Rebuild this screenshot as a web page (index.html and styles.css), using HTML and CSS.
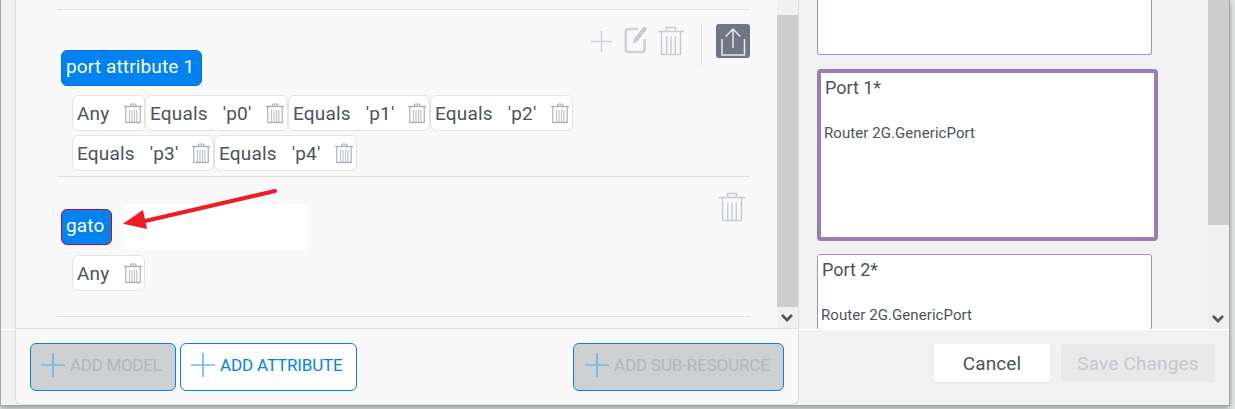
FILE: index.html
```html
<!DOCTYPE html>
<html lang="en">
<head>
<meta charset="utf-8">
<title>Port attributes</title>
<link rel="stylesheet" href="styles.css">
</head>
<body>
<svg class="defs" width="0" height="0">
  <symbol id="trash" viewBox="0 0 26 30">
    <path d="M0 5.500H26M8.500 5V1.500H17.500V5M3.500 6V28.500H22.500V6M8.700 10.500V28M13 10.500V28M17.300 10.500V28" fill="none" stroke="currentColor" stroke-width="1.500"/>
  </symbol>
  <symbol id="bin" viewBox="0 0 18 21">
    <path d="M0 3.500H18" stroke="#a9adb8" stroke-width="1.400"/>
    <path d="M6.500 3V1H12V3" fill="#dddfe3" stroke="#b4b7c0"/>
    <path d="M1.700 4V19.400H16.300V4" fill="none" stroke="#b9bcc4" stroke-width="1.400"/>
    <path d="M1 19.700H17" stroke="#a9adb8" stroke-width="1"/>
    <path d="M5.500 7V19M8 7V19M10.500 7V19M12.800 7V19" stroke="#c0c3ca" stroke-width="1.200"/>
  </symbol>
  <symbol id="plus" viewBox="0 0 24 24">
    <path d="M12 0V24M0 12H24" stroke="currentColor" stroke-width="1.700"/>
  </symbol>
  <symbol id="chevron" viewBox="0 0 12 8">
    <path d="M1 1L6 6L11 1" fill="none" stroke="#555" stroke-width="2.700"/>
  </symbol>
</svg>
<div class="window">
  <div class="gutter"><div class="gutter-top"></div></div>
  <section class="panel">
    <div class="panel-scroll">
      <div class="attributes">
        <div class="stub"></div>
        <article class="attribute first">
          <div class="chips">
            <div class="tag tag-port">port attribute 1</div>
            <div class="rules">
              <div class="rule any"><span>Any</span><svg class="bin"><use href="#bin"/></svg></div>
              <div class="rule"><span>Equals</span><span>'p0'</span><svg class="bin"><use href="#bin"/></svg></div>
              <div class="rule short"><span>Equals</span><span>'p1'</span><svg class="bin"><use href="#bin"/></svg></div>
              <div class="rule"><span>Equals</span><span>'p2'</span><svg class="bin"><use href="#bin"/></svg></div>
              <div class="rule short"><span>Equals</span><span>'p3'</span><svg class="bin"><use href="#bin"/></svg></div>
              <div class="rule"><span>Equals</span><span>'p4'</span><svg class="bin"><use href="#bin"/></svg></div>
            </div>
          </div>
          <div class="actions">
            <svg class="act-plus"><use href="#plus"/></svg>
            <svg class="act-edit" viewBox="0 0 24 28"><path d="M14 3H5Q1.800 3 1.800 6V23Q1.800 26 5 26H17.500Q20.700 26 20.700 23V13" fill="none" stroke="#ced1d6" stroke-width="2.700"/><path d="M8.500 18L10.500 12L19 1.500Q20 .3 21.500 1.300Q23.400 2.500 22.500 4L13.800 15Z" fill="#c8cbd0"/></svg>
            <svg class="trash"><use href="#trash"/></svg>
            <span class="divider"></span>
            <svg class="export" viewBox="0 0 34 34"><rect width="34" height="34" rx="3" fill="#6f7785"/><path d="M6 15V31H28.500V15M17 24V5M9.700 12.500L17 5L24.300 12.500" fill="none" stroke="#e6e8ec" stroke-width="1.500"/></svg>
          </div>
        </article>
        <article class="attribute second">
          <div class="chips">
            <div class="tag-line"><div class="tag tag-gato">gato</div><div class="blank"></div>
              <svg class="arrow" viewBox="0 0 156 42"><path d="M20 34.500L152 4" stroke="#ee1c24" stroke-width="4" stroke-linecap="round"/><path d="M0 36.700L20 23L24 42Z" fill="#ee1c24"/></svg>
            </div>
            <div class="rules"><div class="rule any"><span>Any</span><svg class="bin"><use href="#bin"/></svg></div></div>
          </div>
          <svg class="trash"><use href="#trash"/></svg>
        </article>
      </div>
      <div class="scrollbar left-bar"><div class="thumb"></div><svg class="chevron"><use href="#chevron"/></svg></div>
    </div>
    <footer class="panel-footer">
      <button class="add model" disabled><svg><use href="#plus"/></svg><span>ADD MODEL</span></button>
      <button class="add attr"><svg><use href="#plus"/></svg><span>ADD ATTRIBUTE</span></button>
      <button class="add sub" disabled><svg><use href="#plus"/></svg><span>ADD SUB-RESOURCE</span></button>
    </footer>
  </section>
  <aside class="side">
    <div class="side-scroll">
      <div class="cards">
        <div class="card top"></div>
        <div class="card selected"><h2>Port 1*</h2><p>Router 2G.GenericPort</p></div>
        <div class="card next"><h2>Port 2*</h2><p>Router 2G.GenericPort</p></div>
      </div>
      <div class="scrollbar right-bar"><div class="thumb"></div><svg class="chevron"><use href="#chevron"/></svg></div>
    </div>
    <footer class="side-footer">
      <button class="btn cancel">Cancel</button>
      <button class="btn save" disabled>Save Changes</button>
    </footer>
  </aside>
</div>
</body>
</html>
```
FILE: styles.css
```css
* { box-sizing: border-box; }
body { margin: 0; height: 409px; overflow: hidden; background: #e5e8e7; font-family: Roboto, sans-serif; color: #4e525e; }
svg { display: block; flex: none; }
.defs { position: absolute; }
button { font-family: inherit; padding: 0; }
.window { display: flex; width: 1230px; height: 406px; background: #f1f1f1; border: 1px solid #a6a8a7; border-top: 0; box-shadow: 0 2px 6px #8e9492; }
.gutter { width: 14px; }
.gutter-top { height: 330px; border-bottom: 1px solid #fff; }
.panel { width: 784px; height: 405px; background: #f9f9f9; border: 1px solid #dedfe0; border-top: 0; border-radius: 0 0 6px 6px; }
.panel-scroll { display: flex; height: 329px; border-bottom: 1px solid #dedfe0; }
.attributes { width: 761px; padding: 0 27px 0 41px; }
.stub { height: 10px; border-bottom: 1px solid #dedfe0; }
.attribute { display: flex; justify-content: space-between; border-bottom: 1px solid #dedfe0; padding-left: 4px; }
.first { height: 167px; padding-top: 14px; }
.second { height: 140px; padding-top: 27px; }
.first .chips { width: 516px; padding-top: 26px; }
.tag { height: 36px; padding-left: 4px; border: 1px solid #0672d8; border-radius: 6px; background: #0082f0; color: #fff; font-size: 19px; line-height: 31px; letter-spacing: .14px; white-space: nowrap; }
.tag-port { width: 141px; }
.tag-gato { width: 51px; border-color: #c00c34; }
.tag-line { position: relative; display: flex; align-items: center; gap: 12px; height: 46px; }
.blank { width: 184px; height: 46px; background: #fff; }
.arrow { position: absolute; left: 62px; top: -17px; width: 156px; height: 42px; }
.rules { display: flex; flex-wrap: wrap; gap: 4px 0; padding: 9px 0 0 11px; }
.second .rules { padding-top: 5px; }
.rule { display: flex; width: 143px; height: 36px; padding: 0 2px 0 4px; border: 1px solid #e3e3e4; border-radius: 6px; background: #fff; font-size: 19px; line-height: 35px; letter-spacing: .2px; }
.rule.short { width: 142px; }
.rule.any { width: 73px; }
.rule span + span { margin-left: 15px; }
.bin { width: 18px; height: 21px; margin: 7px 0 0 auto; }
.rule:not(.any) .bin { margin-right: 1px; }
.actions { display: flex; align-items: flex-start; margin-left: auto; color: #ced1d6; }
.act-plus { width: 21px; height: 21px; margin: 7px 12px 0 0; }
.act-edit { width: 24px; height: 28px; margin: 2px 10px 0 0; }
.trash { width: 26px; height: 30px; margin-top: 2px; color: #c8cbd1; }
.second .trash { margin: -12px 5px 0 0; }
.divider { width: 1px; height: 41px; margin: 0 14px 0 17px; background: #dedfe0; }
.export { width: 34px; height: 34px; }
.scrollbar { width: 21px; background: #f0f0f0; }
.thumb { background: #cdcdcd; }
.left-bar { padding-top: 15px; }
.left-bar .thumb { height: 292px; }
.right-bar .thumb { height: 225px; }
.chevron { width: 12px; height: 8px; margin: 7px 0 0 4px; }
.right-bar .chevron { margin-top: 90px; }
.panel-footer { display: flex; padding: 14px 14px 0; gap: 4px; }
.add { display: flex; align-items: center; height: 48px; border: 1px solid #0082f0; border-radius: 6px; background: #fff; color: #0082f0; font-size: 17px; letter-spacing: -.15px; white-space: nowrap; }
.add svg { width: 24px; height: 24px; margin: -5px 5px 0 10px; color: #6bbce8; }
.add span { padding-bottom: 4px; }
.add:disabled { background: #cecfd0; color: #b3b6bb; }
.model { width: 146px; letter-spacing: -.3px; }
.attr { width: 177px; }
.sub { width: 211px; margin-left: auto; }
.sub svg { margin-left: 11px; }
.side { width: 430px; }
.side-scroll { display: flex; height: 330px; justify-content: space-between; border-bottom: 1px solid #fff; overflow: hidden; }
.cards { padding-left: 18px; }
.card { width: 335px; background: #fff; border: 1px solid #a98fc0; border-radius: 3px; padding: 0 3px; }
.top { height: 55px; border-top: 0; border-radius: 0 0 3px 3px; }
.selected { width: 341px; height: 172px; margin: 14px 0 13px; border: 4px solid #9c7cb6; border-radius: 4px; }
.next { height: 160px; }
h2, p { margin: 0; font-weight: 400; }
h2 { font-size: 18px; line-height: 30px; padding-left: 1px; letter-spacing: -.05px; }
p { font-size: 15px; line-height: 20px; margin-top: 20px; letter-spacing: .07px; }
.side-footer { display: flex; gap: 11px; padding: 14px 14px 0 135px; }
.btn { height: 38px; border: 0; border-radius: 2px; color: #4e525e; font-size: 19px; letter-spacing: .15px; }
.cancel { width: 116px; background: #fff; box-shadow: 0 1px 2px #e0e0e0; }
.save { width: 154px; background: #e9e9e9; color: #c4c7ce; }
```
